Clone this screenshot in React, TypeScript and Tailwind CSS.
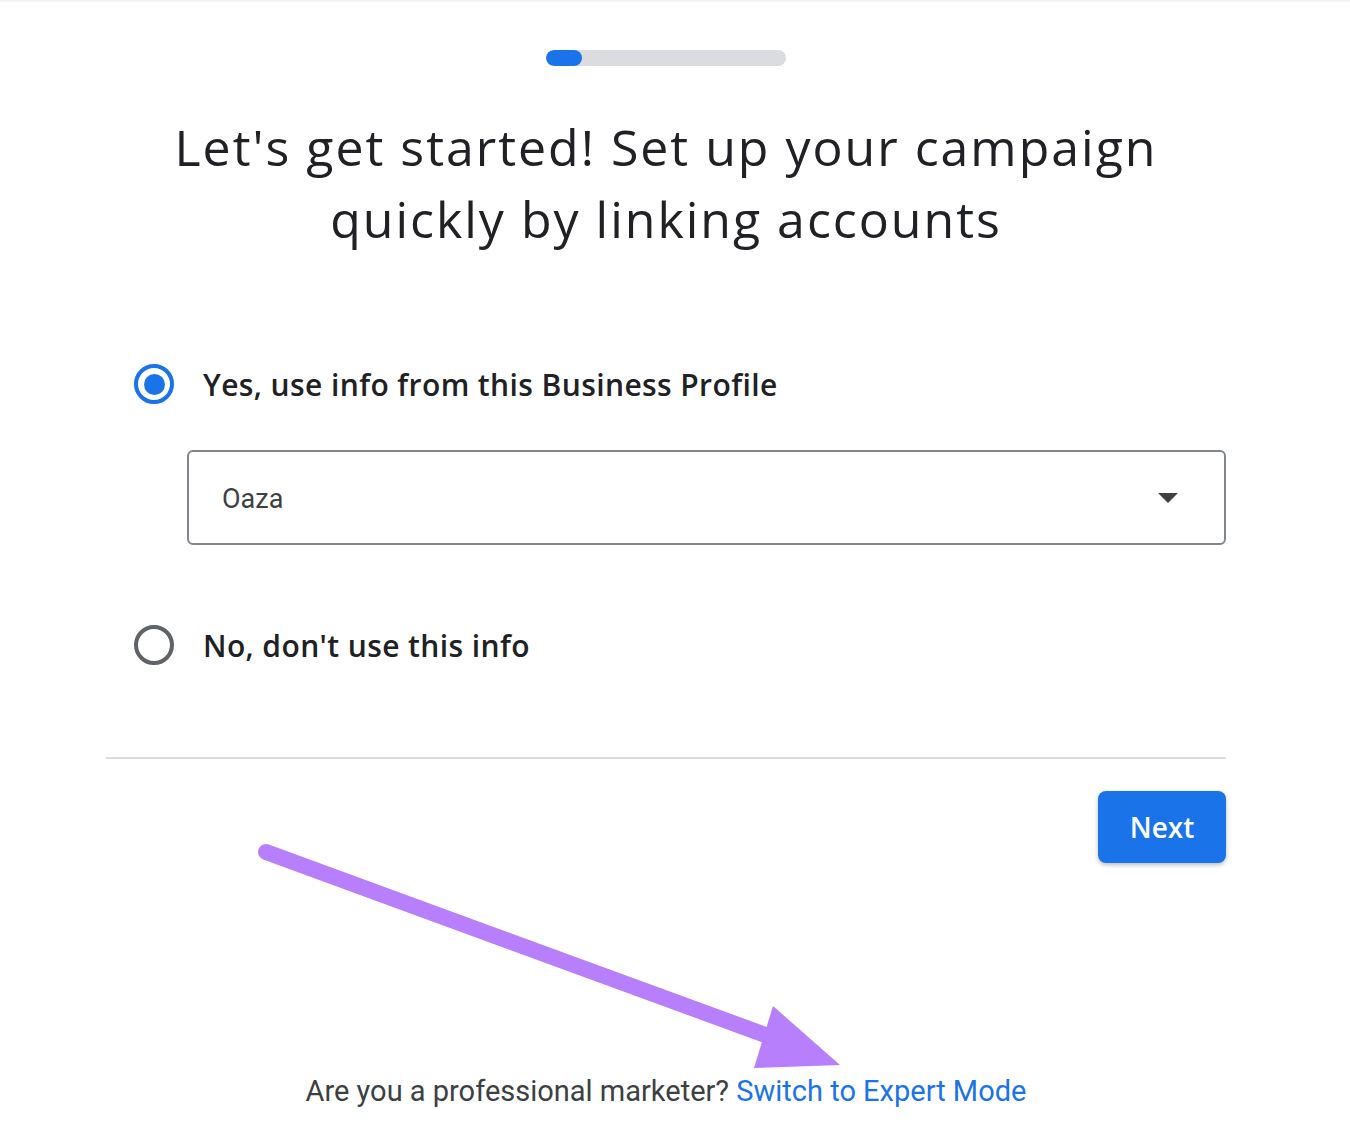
import * as React from "react";

function Radio({ checked }: { checked: boolean }) {
  return (
    <span
      className={
        "flex h-[40px] w-[40px] shrink-0 items-center justify-center rounded-full border-[4px] " +
        (checked ? "border-[#1a73e8]" : "border-[#5f6368]")
      }
    >
      {checked && <span className="block h-[21px] w-[21px] rounded-full bg-[#1a73e8]" />}
    </span>
  );
}

function Arrow() {
  return (
    <svg
      className="pointer-events-none absolute left-0 top-0"
      width="1350"
      height="1148"
      viewBox="0 0 1350 1148"
    >
      <line
        x1="266"
        y1="850"
        x2="790"
        y2="1042"
        stroke="#b77ffc"
        strokeWidth="16"
        strokeLinecap="round"
      />
      <polygon points="773,1004 840,1063 754,1066" fill="#b77ffc" />
    </svg>
  );
}

export default function App() {
  const [choice, setChoice] = React.useState<"yes" | "no">("yes");

  return (
    <div className="relative min-h-[1148px] w-[1350px] overflow-hidden border-t-2 border-[#f1f3f4] bg-white">
      <div className="ml-[106px] flex w-[1120px] flex-col">
        <div className="mt-[48px] flex justify-center">
          <div className="h-[16px] w-[240px] overflow-hidden rounded-full bg-[#dadce0]">
            <div className="h-full w-[36px] rounded-full bg-[#1a73e8]" />
          </div>
        </div>

        <h1
          className="mt-[45px] text-center text-[50px] leading-[72px] font-normal tracking-[2px] text-[#202124]"
          style={{ fontFamily: '"Open Sans", "Noto Sans", sans-serif' }}
        >
          Let's get started! Set up your campaign
          <br />
          quickly by linking accounts
        </h1>

        <div style={{ fontFamily: '"Open Sans", "Noto Sans", sans-serif' }}>
          <button
            onClick={() => setChoice("yes")}
            className="mt-[109px] ml-[28px] flex h-[40px] items-center gap-[29px] text-[30px] font-semibold tracking-[0.4px] text-[#202124]"
          >
            <Radio checked={choice === "yes"} />
            <span>Yes, use info from this Business Profile</span>
          </button>

          <div
            className="mt-[46px] ml-[81px] flex h-[95px] w-[1039px] items-center justify-between rounded-[6px] border-2 border-[#80868b] pl-[33px] pr-[46px] text-[27px] text-[#3c4043]"
            style={{ fontFamily: "Roboto, sans-serif" }}
          >
            <span className="mt-[3px]">Oaza</span>
            <svg width="20" height="10" viewBox="0 0 20 10">
              <polygon points="0,0 20,0 10,10" fill="#3c4043" />
            </svg>
          </div>

          <button
            onClick={() => setChoice("no")}
            className="mt-[80px] ml-[28px] flex h-[40px] items-center gap-[29px] text-[30px] font-semibold tracking-[0.4px] text-[#202124]"
          >
            <Radio checked={choice === "no"} />
            <span>No, don't use this info</span>
          </button>
        </div>

        <div className="mt-[92px] h-[2px] w-full bg-[#dadce0]" />

        <div className="mt-[32px] flex justify-end">
          <button
            className="h-[72px] w-[128px] rounded-[8px] bg-[#1a73e8] text-[28px] font-semibold text-white shadow-[0_2px_4px_rgba(60,64,67,0.35)]"
            style={{ fontFamily: '"Open Sans", "Noto Sans", sans-serif' }}
          >
            Next
          </button>
        </div>

        <p
          className="mt-[207px] text-center text-[29px] text-[#3c4043]"
          style={{ fontFamily: "Roboto, sans-serif" }}
        >
          Are you a professional marketer?{" "}
          <a href="#" className="text-[#1a73e8]">
            Switch to Expert Mode
          </a>
        </p>
      </div>
      <Arrow />
    </div>
  );
}
